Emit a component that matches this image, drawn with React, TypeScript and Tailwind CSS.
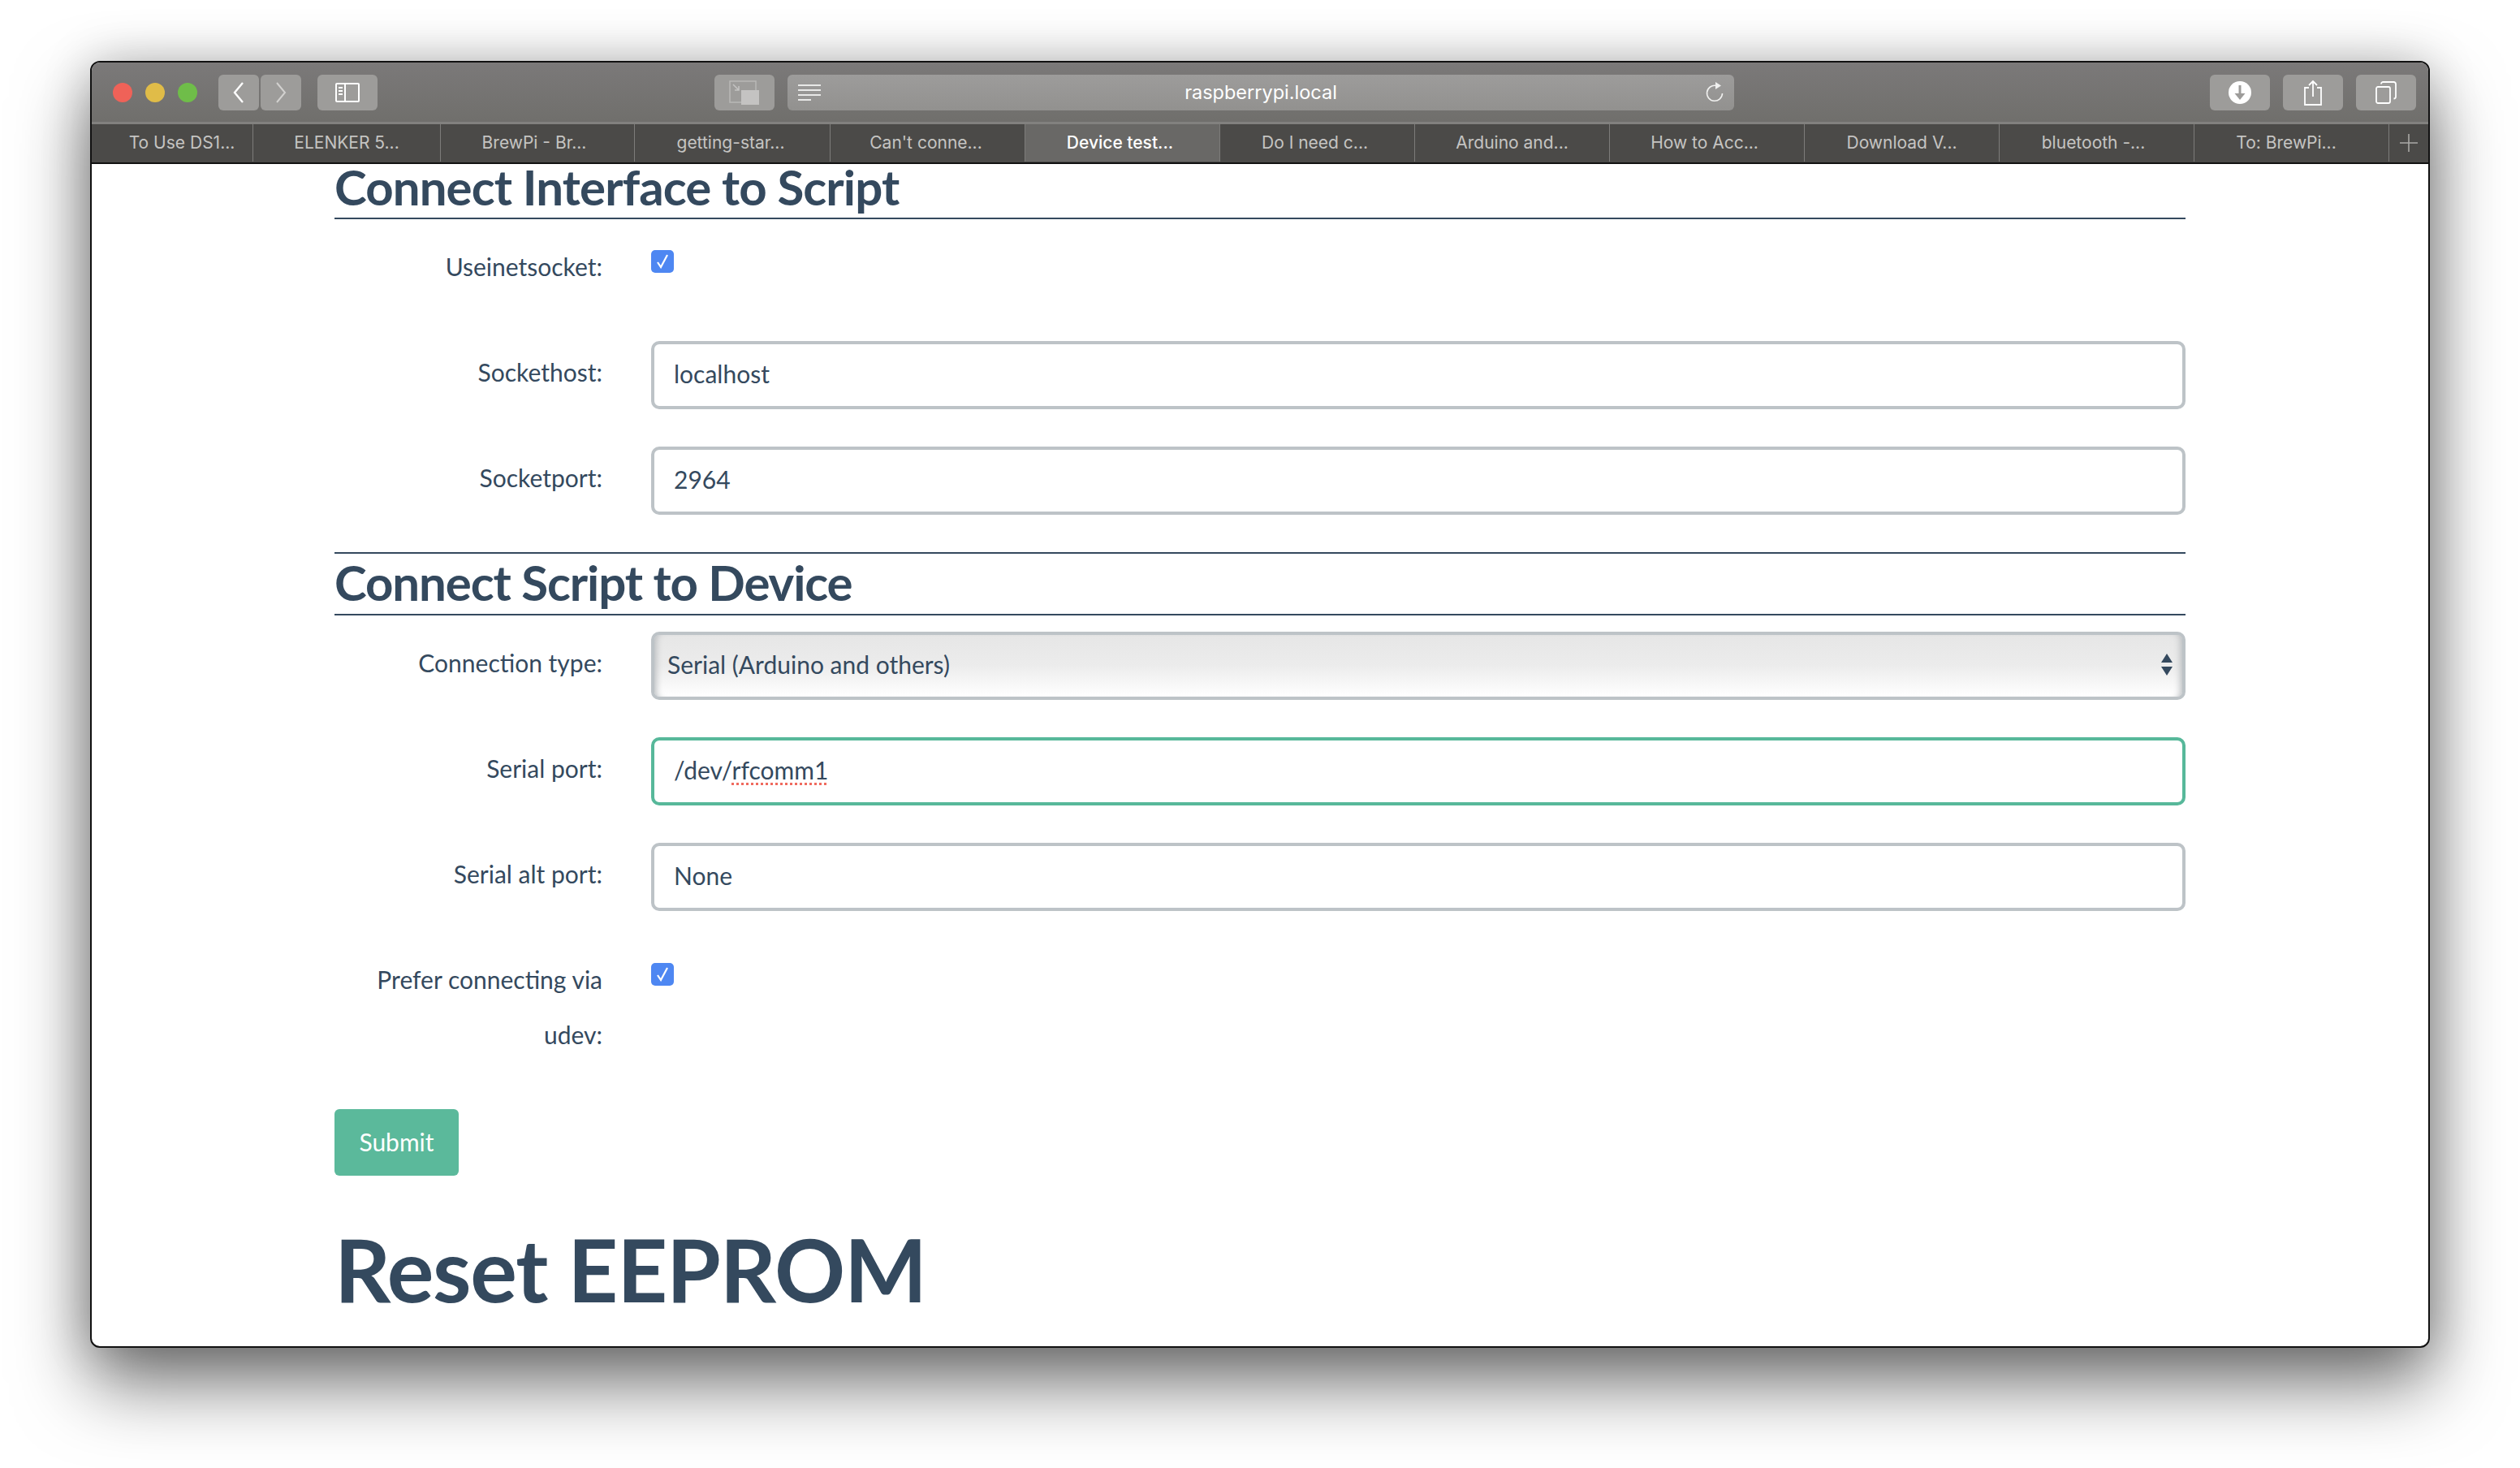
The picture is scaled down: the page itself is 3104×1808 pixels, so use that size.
const tabs = [
  { title: "To Use DS1...", width: "w-[199px] pl-[24px]" },
  { title: "ELENKER 5...", width: "w-[231px]" },
  { title: "BrewPi - Br...", width: "w-[239px] pr-[8px]" },
  { title: "getting-star...", width: "w-[241px] pr-[4px]" },
  { title: "Can't conne...", width: "w-[240px] pr-[4px]" },
  { title: "Device test...", width: "w-[240px] pr-[6px]", active: true },
  { title: "Do I need c...", width: "w-[240px] pr-[6px]" },
  { title: "Arduino and...", width: "w-[240px]" },
  { title: "How to Acc...", width: "w-[240px] pr-[6px]" },
  { title: "Download V...", width: "w-[240px]" },
  { title: "bluetooth -...", width: "w-[240px] pr-[8px]" },
  { title: "To: BrewPi...", width: "w-[240px] pr-[13px]" },
];

function ToolButton({ className, children }: { className: string; children?: React.ReactNode }) {
  return (
    <div className={`flex h-[44px] items-center justify-center rounded-[6px] bg-[#9d9c9a] ${className}`}>
      {children}
    </div>
  );
}

function TitleBar() {
  return (
    <div className="flex h-[73px] items-center bg-linear-to-b from-[#7b7979] to-[#706f6c] pl-[26px]">
      <div className="flex gap-[16px]">
        <div className="size-[24px] rounded-full bg-[#ef6258]" />
        <div className="size-[24px] rounded-full bg-[#e0bc48]" />
        <div className="size-[24px] rounded-full bg-[#6fbd49]" />
      </div>
      <ToolButton className="ml-[26px] w-[50px]">
        <svg width="18" height="26" viewBox="0 0 18 26" fill="none" stroke="#fff" strokeWidth="2.4">
          <path d="M14 1 4 13l10 12" />
        </svg>
      </ToolButton>
      <ToolButton className="ml-[2px] w-[50px]">
        <svg width="18" height="26" viewBox="0 0 18 26" fill="none" stroke="#d2d1cf" strokeWidth="2">
          <path d="m4 1 10 12L4 25" />
        </svg>
      </ToolButton>
      <ToolButton className="ml-[20px] w-[74px]">
        <svg width="30" height="24" viewBox="0 0 30 24" fill="none" stroke="#fff" strokeWidth="2">
          <rect x="1" y="1" width="28" height="22" rx="1" />
          <path d="M12 1v22" />
          <path d="M4 6h5M4 10h5M4 14h5" strokeWidth="2" />
        </svg>
      </ToolButton>
      <ToolButton className="ml-[415px] w-[74px]">
        <svg width="38" height="30" viewBox="0 0 38 30" fill="none">
          <rect x="1" y="1" width="32" height="26" stroke="#b9b8b6" strokeWidth="1.5" />
          <rect x="15" y="12" width="22" height="18" fill="#c4c3c2" />
          <path d="m5 5 7 7M12 7v5H7" stroke="#c4c3c2" strokeWidth="1.5" />
        </svg>
      </ToolButton>
      <div className="relative ml-[16px] flex h-[44px] w-[1166px] items-center justify-center rounded-[6px] bg-linear-to-b from-[#9d9c9b] to-[#92918f]">
        <svg className="absolute left-[13px] top-[11px]" width="28" height="22" viewBox="0 0 28 22" stroke="#e8e8e7" strokeWidth="2">
          <path d="M0 2h28M0 8h28M0 14h28M0 20h16" />
        </svg>
        <span className="font-['Inter',sans-serif] text-[23.500px] text-white">raspberrypi.local</span>
        <svg className="absolute right-[12px] top-[8px]" width="24" height="28" viewBox="0 0 24 28" fill="none" stroke="#f0f0ef" strokeWidth="1.6">
          <path d="M14 5.500A9.500 9.500 0 1 0 21.500 15" />
          <path d="M13 1v9l7-4.500z" fill="#f0f0ef" stroke="none" />
        </svg>
      </div>
      <ToolButton className="ml-[586px] w-[74px]">
        <svg width="28" height="28" viewBox="0 0 28 28">
          <circle cx="14" cy="14" r="14" fill="#fff" />
          <path d="M12.500 5h3v10h5L14 23l-6.500-8h5z" fill="#9d9c9a" />
        </svg>
      </ToolButton>
      <ToolButton className="ml-[16px] w-[74px]">
        <svg width="24" height="32" viewBox="0 0 24 32" fill="none" stroke="#fff" strokeWidth="1.8">
          <path d="M7 10H2v21h20V10h-5M12 21V2M7 7l5-5 5 5" />
        </svg>
      </ToolButton>
      <ToolButton className="ml-[16px] w-[74px]">
        <svg width="26" height="28" viewBox="0 0 26 28" fill="none" stroke="#fff" strokeWidth="1.8">
          <rect x="1" y="7" width="17" height="20" rx="2" />
          <path d="M7 3.500a2.500 2.500 0 0 1 2.500-2.500H22.500a2.500 2.500 0 0 1 2.500 2.500V19a2.500 2.500 0 0 1-2.500 2.500" />
        </svg>
      </ToolButton>
    </div>
  );
}

function TabBar() {
  return (
    <div className="flex h-[50px] border-t-[3px] border-[#82817f] bg-[#4b4a48] pb-[1px] font-['Inter',sans-serif] text-[21px]">
      {tabs.map((tab) => (
        <div
          key={tab.title}
          className={`flex shrink-0 items-center justify-center border-r-[1.500px] border-[#7d7c7a] ${tab.width} ${
            tab.active ? "bg-[#696866] font-medium text-white" : "text-[#c5c4c2]"
          }`}
        >
          {tab.title}
        </div>
      ))}
      <div className="flex flex-1 items-center justify-center">
        <svg width="22" height="22" viewBox="0 0 22 22" stroke="#aaa9a7" strokeWidth="1.6">
          <path d="M11 0v22M0 11h22" />
        </svg>
      </div>
    </div>
  );
}

function Label({ children }: { children: React.ReactNode }) {
  return <div className="w-[330px] shrink-0 pt-[4px] text-right leading-[68px]">{children}</div>;
}

function Field({ label, children, focused }: { label: string; children: React.ReactNode; focused?: boolean }) {
  return (
    <div className="flex gap-[60px]">
      <Label>{label}</Label>
      <div
        className={`flex h-[84px] flex-1 items-center rounded-[10px] border-4 px-[24px] pb-[3px] ${
          focused ? "border-[#57b89a]" : "border-[#bdc3c7]"
        }`}
      >
        {children}
      </div>
    </div>
  );
}

function Check({ label }: { label: React.ReactNode }) {
  return (
    <div className="flex gap-[60px]">
      <Label>{label}</Label>
      <div className="mt-[18px] flex size-[28px] items-center justify-center rounded-[5px] bg-[#4e87f2]">
        <svg width="16" height="18" viewBox="0 0 16 18" fill="none" stroke="#fff" strokeWidth="2.2">
          <path d="m2 10 4 6 8-15" />
        </svg>
      </div>
    </div>
  );
}

function ConnectionSelect() {
  return (
    <div className="flex gap-[60px]">
      <Label>Connection type:</Label>
      <div className="flex h-[84px] flex-1 items-center justify-between rounded-[10px] border-4 border-[#bdc3c7] bg-linear-to-b from-[#e6e6e6] via-[#ececec] to-white pb-[3px] pl-[16px] pr-[12px] shadow-[inset_9px_0_8px_-7px_#b4b8bb,inset_-9px_0_8px_-7px_#b4b8bb]">
        <span>Serial (Arduino and others)</span>
        <svg width="14" height="27" viewBox="0 0 14 27" fill="#34495e">
          <path d="M7 0l7 11H0zM7 27 0 16h14z" />
        </svg>
      </div>
    </div>
  );
}

export default function App() {
  return (
    <div className="h-[1808px] w-[3104px] overflow-hidden bg-white pl-[111px] pt-[75px]">
      <div className="flex h-[1585px] w-[2882px] flex-col overflow-hidden rounded-[12px] border-2 border-[#111] bg-white shadow-[0_44px_90px_rgba(0,0,0,0.55),0_0_60px_rgba(0,0,0,0.2)]">
        <TitleBar />
        <TabBar />
        <main className="flex-1 border-t-2 border-[#111] pl-[299px] pr-[299px] font-['Lato',sans-serif] text-[30px] text-[#34495e]">
          <h3 className="h-[68px] border-b-2 border-[#34495e] text-[60px] font-bold leading-[56px] tracking-[-0.9px]">
            Connect Interface to Script
          </h3>
          <div className="mt-[20px] h-[130px]">
            <Check label="Useinetsocket:" />
          </div>
          <div className="flex flex-col gap-[46px]">
            <Field label="Sockethost:">localhost</Field>
            <Field label="Socketport:">2964</Field>
          </div>
          <h3 className="mt-[46px] h-[78px] border-y-2 border-[#34495e] text-[60px] font-bold leading-[70px] tracking-[-1.100px]">
            Connect Script to Device
          </h3>
          <div className="mt-[20px] flex flex-col gap-[46px]">
            <ConnectionSelect />
            <Field label="Serial port:" focused>
              <span>
                /dev/
                <span className="underline decoration-[#ef6a5e] decoration-dotted decoration-[3px] underline-offset-[4px]">
                  rfcomm1
                </span>
              </span>
            </Field>
            <Field label="Serial alt port:">None</Field>
            <Check
              label={
                <>
                  Prefer connecting via
                  <br />
                  udev:
                </>
              }
            />
          </div>
          <button className="mt-[58px] block h-[82px] w-[153px] rounded-[6px] bg-[#5bb99b] pb-[2px] text-white">Submit</button>
          <h1 className="mt-[49px] text-[108px] font-bold leading-[130px] tracking-[-1.200px]">Reset EEPROM</h1>
        </main>
      </div>
    </div>
  );
}
